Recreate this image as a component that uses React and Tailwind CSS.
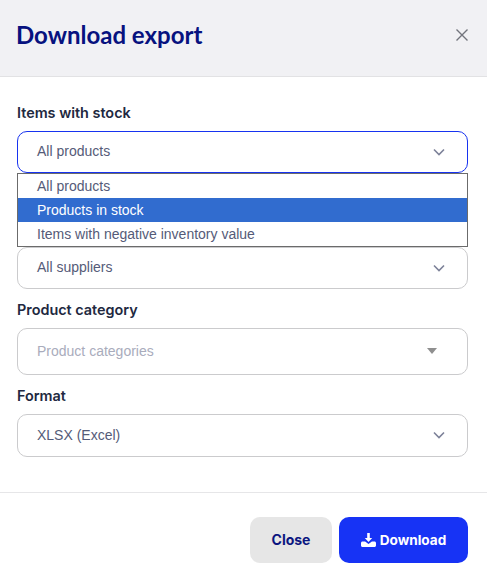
import React from "react";

const Chevron = ({ className = "text-[#7d8299]" }) => (
  <svg width="14" height="9" viewBox="0 0 14 9" fill="none" className={className}>
    <path d="M2 1.5 7 6.5 12 1.5" stroke="currentColor" strokeWidth="1.6" />
  </svg>
);

const Select = ({ value, h = "h-[42px]", focused, placeholder, caret }) => (
  <div
    className={`${h} flex items-center justify-between rounded-[10px] bg-white pl-[19px] pr-[21px] text-sm ${
      focused ? "border-[1.5px] border-[#1733f0]" : "border border-[#cbcbcd]"
    }`}
    style={{ fontFamily: '"Liberation Sans", sans-serif' }}
  >
    <span className={`-translate-y-px ${placeholder ? "text-[#a9acbc]" : "text-[#555b78]"}`}>{value}</span>
    {caret ? (
      <span className="mr-[9px] h-0 w-0 -translate-y-px border-x-[5px] border-t-[6px] border-x-transparent border-t-[#8f8f8f]" />
    ) : (
      <Chevron />
    )}
  </div>
);

const Label = ({ children }) => (
  <div className="mb-2 h-5 text-[14.4px] font-semibold leading-5 text-[#212840]">{children}</div>
);

export default function App() {
  return (
    <div
      className="flex h-[581px] w-[487px] flex-col overflow-hidden bg-white"
      style={{ fontFamily: '"Inter", "Liberation Sans", sans-serif' }}
    >
      <header className="flex h-[77px] shrink-0 items-center justify-between border-b border-[#e2e2e4] bg-[#f1f1f4] pb-[6px] pl-4 pr-[18px]">
        <h1
          className="text-[24px] font-bold leading-none text-[#07127f]"
          style={{ fontFamily: '"Lato", sans-serif' }}
        >
          Download export
        </h1>
        <svg width="14" height="14" viewBox="0 0 14 14" fill="none" className="text-[#72747c]">
          <path d="M1.5 1.5 12.5 12.5M12.5 1.5 1.5 12.5" stroke="currentColor" strokeWidth="1.4" />
        </svg>
      </header>

      <main className="relative flex-1 pl-[17px] pr-[19px] pt-[26px]">
        <Label>Items with stock</Label>
        <div className="relative">
          <Select value="All products" focused />
          <ul
            className="absolute left-0 right-0 top-[42px] z-10 border border-[#6b6b6b] bg-white text-sm text-[#555b78]"
            style={{ fontFamily: '"Liberation Sans", sans-serif' }}
          >
            <li className="flex h-6 items-center pl-[19px]">All products</li>
            <li className="flex h-6 items-center bg-[#316ccf] pl-[19px] text-white">Products in stock</li>
            <li className="flex h-6 items-center pl-[19px]">Items with negative inventory value</li>
          </ul>
        </div>

        <div className="mt-[74px]">
          <Select value="All suppliers" />
        </div>

        <div className="mt-[11px]">
          <Label>Product category</Label>
          <Select value="Product categories" h="h-[47px]" placeholder caret />
        </div>

        <div className="mt-[11px]">
          <Label>Format</Label>
          <Select value="XLSX (Excel)" h="h-[43px]" />
        </div>
      </main>

      <footer className="flex h-[89px] shrink-0 justify-end gap-[7px] border-t border-[#e6e6e8] pr-[19px] pt-6">
        <button className="h-[46px] w-[82px] rounded-[10px] bg-[#e6e6e6] text-sm font-bold text-[#0b1680]">
          Close
        </button>
        <button className="flex h-[46px] w-[129px] items-center justify-center gap-1 rounded-[10px] bg-[#1733f5] text-[13.6px] font-bold text-white">
          <svg width="15" height="14" viewBox="0 0 15 14" fill="currentColor">
            <path d="M6.2 0h2.6v5h2.4L7.5 9 3.8 5h2.4z" />
            <path d="M1.5 8.5h2.6L7.5 11l3.4-2.5h2.6c.8 0 1.5.7 1.5 1.5v2.5c0 .8-.7 1.5-1.5 1.5h-12C.7 14 0 13.3 0 12.5V10c0-.8.7-1.5 1.5-1.5z" />
          </svg>
          Download
        </button>
      </footer>
    </div>
  );
}
